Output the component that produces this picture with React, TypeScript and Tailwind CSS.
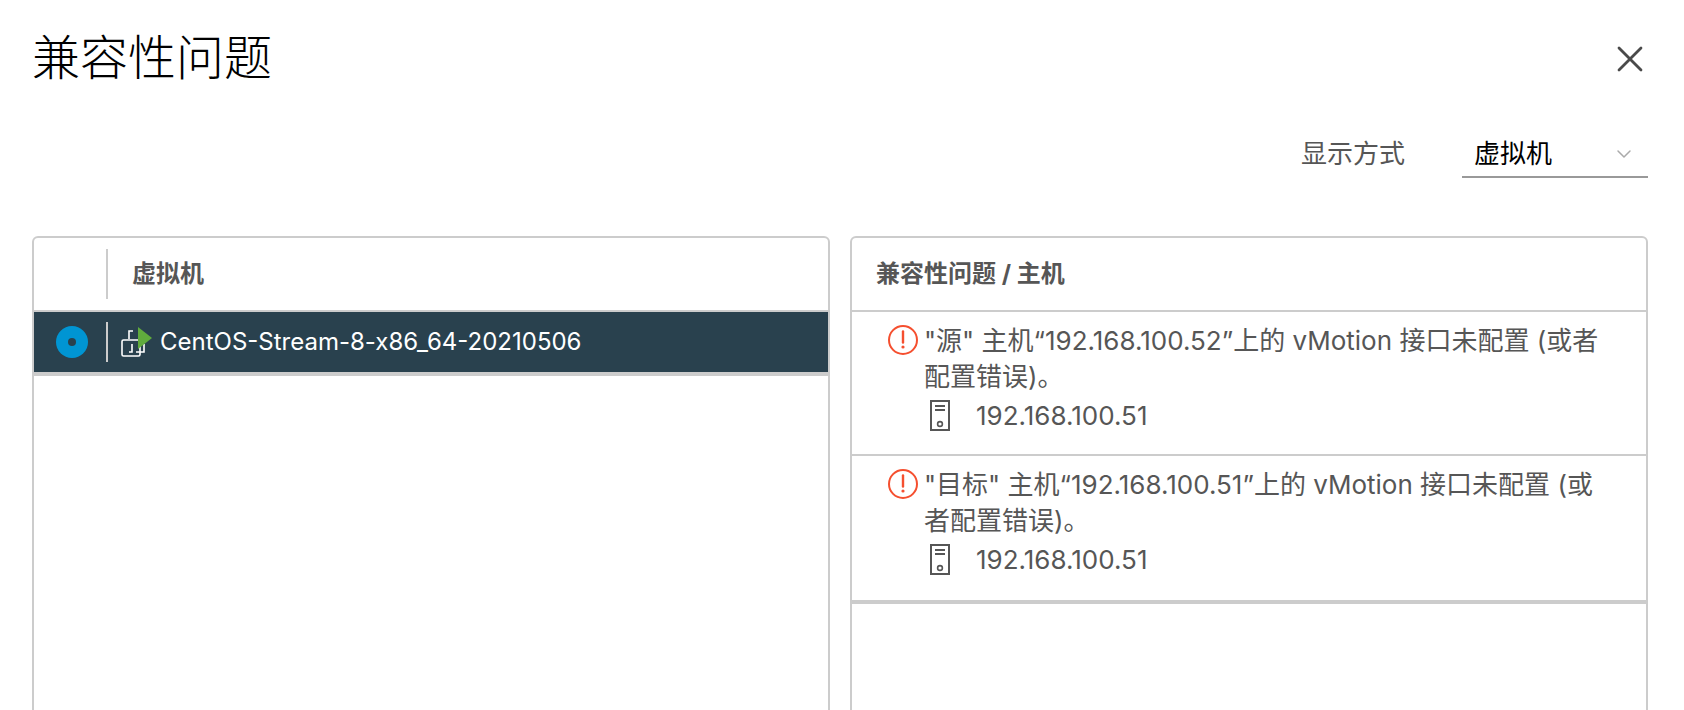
import { X, ChevronDown } from "lucide-react";

const font = { fontFamily: '"Inter", "Noto Sans CJK SC", sans-serif' };

function ErrorIcon() {
    return (
        <svg width="32" height="32" viewBox="0 0 32 32" fill="none" className="shrink-0">
            <circle cx="16" cy="16" r="14" stroke="#f54f2f" strokeWidth="2" />
            <path d="M16 7.5v11" stroke="#f54f2f" strokeWidth="2.4" strokeLinecap="round" />
            <circle cx="16" cy="23" r="1.6" fill="#f54f2f" />
        </svg>
    );
}

function HostIcon() {
    return (
        <svg width="22" height="32" viewBox="0 0 22 32" fill="none" className="shrink-0">
            <rect x="1" y="1" width="18" height="29" stroke="#565656" strokeWidth="2" />
            <path d="M5 6h10M5 10h10" stroke="#565656" strokeWidth="2" />
            <circle cx="10" cy="24" r="2.4" stroke="#565656" strokeWidth="1.6" />
        </svg>
    );
}

function VmIcon() {
    return (
        <svg width="32" height="32" viewBox="0 0 32 32" fill="none" className="shrink-0">
            <path d="M9 13V5h4M18 5h3v14h-3M9 13" stroke="#fff" strokeWidth="1.6" />
            <rect x="2" y="14" width="18" height="16" rx="1.5" stroke="#fff" strokeWidth="1.6" />
            <path d="M12 18v8h-3M24 18v8h-8" stroke="#fff" strokeWidth="1.6" />
            <path d="M18 1l14 11-14 11z" fill="#60ab3d" />
        </svg>
    );
}

function IssueRow({ title, last }: { title: string; last?: boolean }) {
    return (
        <div className={`h-[144px] pl-[35px] pr-[30px] ${last ? "" : "border-b-2 border-[#ccc]"}`}>
            <div className="flex gap-[5px] pt-[12px]">
                <ErrorIcon />
                <div className="text-[26px] leading-[36px] text-[#565656] -mt-[1px]">{title}</div>
            </div>
            <div className="flex items-center mt-[3px] ml-[43px]">
                <HostIcon />
                <span className="ml-[24px] text-[26px] leading-[36px] text-[#565656]">192.168.100.51</span>
            </div>
        </div>
    );
}

export default function App() {
    return (
        <div style={font} className="w-[1684px] h-[710px] overflow-hidden bg-white relative">
            <div className="flex justify-between pl-[32px] pr-[36px] pt-[24px]">
                <h1 className="text-[48px] leading-[68px] font-extralight text-black">兼容性问题</h1>
                <X size={44} strokeWidth={1.5} color="#4a4a4a" className="mt-[13px] -mr-[4px]" />
            </div>
            <div className="flex justify-end items-start pr-[36px] mt-[40px]">
                <span className="text-[26px] leading-[36px] text-[#565656] mt-[4px]">显示方式</span>
                <div className="ml-[57px] w-[186px] h-[46px] border-b-2 border-[#999] flex items-center justify-between pl-[12px] pr-[12px]">
                    <span className="text-[26px] leading-[36px] text-black">虚拟机</span>
                    <ChevronDown size={24} strokeWidth={1.5} color="#aaa" />
                </div>
            </div>
            <div className="flex gap-[20px] pl-[32px] pr-[36px] mt-[58px]">
                <div className="w-[798px] h-[600px] border-2 border-[#ccc] rounded-[6px]">
                    <div className="h-[74px] border-b-2 border-[#ccc] flex items-center">
                        <div className="w-[74px] flex justify-end shrink-0">
                            <div className="w-[2px] h-[50px] bg-[#ccc]" />
                        </div>
                        <span className="ml-[24px] text-[24px] font-bold text-[#565656]">虚拟机</span>
                    </div>
                    <div className="h-[60px] bg-[#29414e] flex items-center border-b-0">
                        <div className="w-[74px] flex items-center shrink-0">
                            <div className="ml-[22px] w-[32px] h-[32px] rounded-full bg-[#0095d3] flex items-center justify-center">
                                <div className="w-[8px] h-[8px] rounded-full bg-[#29414e]" />
                            </div>
                            <div className="ml-[18px] w-[2px] h-[40px] bg-[#ccc]" />
                        </div>
                        <div className="ml-[12px]"><VmIcon /></div>
                        <span className="ml-[8px] text-[24px] text-white">CentOS-Stream-8-x86_64-20210506</span>
                    </div>
                    <div className="h-[4px] bg-[#ccc]" />
                </div>
                <div className="w-[798px] h-[600px] border-2 border-[#ccc] rounded-[6px]">
                    <div className="h-[74px] border-b-2 border-[#ccc] flex items-center pl-[24px]">
                        <span className="text-[24px] font-bold text-[#565656]">兼容性问题 / 主机</span>
                    </div>
                    <IssueRow title="&quot;源&quot; 主机“192.168.100.52”上的 vMotion 接口未配置 (或者配置错误)。" />
                    <IssueRow title="&quot;目标&quot; 主机“192.168.100.51”上的 vMotion 接口未配置 (或者配置错误)。" last />
                    <div className="h-[4px] bg-[#ccc]" />
                </div>
            </div>
        </div>
    );
}
